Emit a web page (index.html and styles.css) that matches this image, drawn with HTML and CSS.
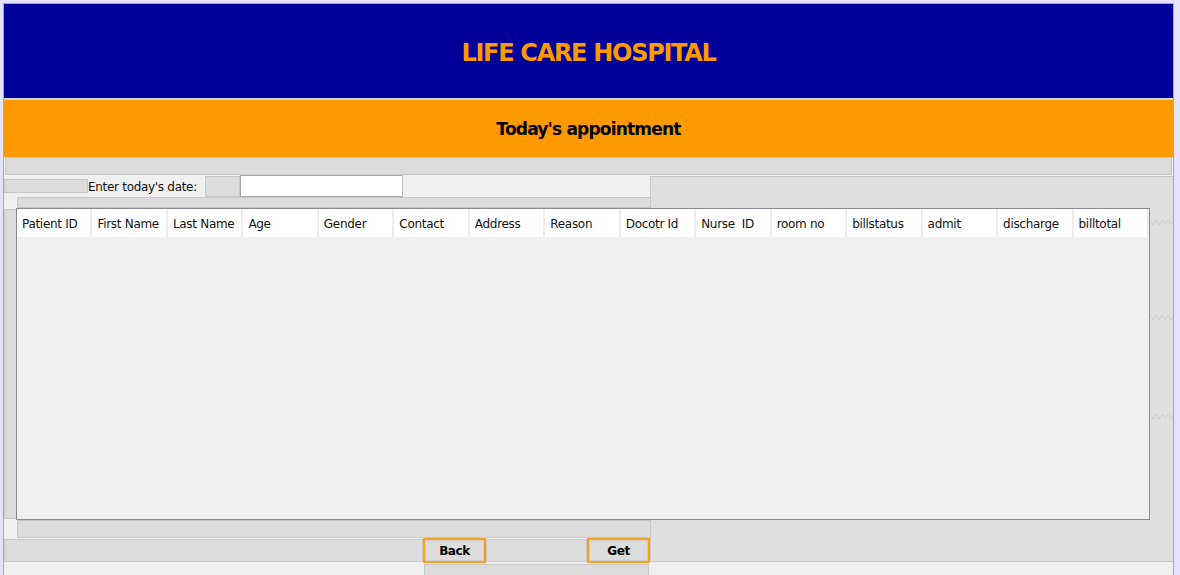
FILE: index.html
```html
<!DOCTYPE html>
<html>
<head>
<meta charset="utf-8">
<link rel="stylesheet" href="styles.css">
</head>
<body>
<div class="frame">
  <header class="banner"><h1 class="title">LIFE CARE HOSPITAL</h1></header>
  <div class="sep"></div>
  <div class="subbanner"><h2 class="subtitle">Today's appointment</h2></div>
  <div class="topbar"></div>
  <main class="main">
    <div class="rpanel"></div>
    <div class="daterow">
      <div class="pad-box"></div>
      <label class="lbl" for="d">Enter today's date:</label>
      <div class="gap-box"></div>
      <input id="d" class="date-input" type="text">
    </div>
    <div class="bar bar-b"></div>
    <div class="tablerow">
      <div class="lstrip"></div>
      <div class="table">
        <div class="thead">
          <div class="th">Patient ID</div>
          <div class="th">First Name</div>
          <div class="th">Last Name</div>
          <div class="th">Age</div>
          <div class="th">Gender</div>
          <div class="th">Contact</div>
          <div class="th">Address</div>
          <div class="th">Reason</div>
          <div class="th">Docotr Id</div>
          <div class="th">Nurse&nbsp; ID</div>
          <div class="th">room no</div>
          <div class="th">billstatus</div>
          <div class="th">admit</div>
          <div class="th">discharge</div>
          <div class="th">billtotal</div>
        </div>
      </div>
      <svg class="zig" width="23" height="312" viewBox="0 0 23 312">
        <polyline points="0,12 3,17 6,12 9,17 12,12 15,17 18,12 21,17 23,13" />
        <polyline points="0,107 3,112 6,107 9,112 12,107 15,112 18,107 21,112 23,108" />
        <polyline points="0,206 3,211 6,206 9,211 12,206 15,211 18,206 21,211 23,207" />
      </svg>
    </div>
    <div class="bar bar-d"></div>
    <div class="btnrow">
      <div class="gbox gbox-left"></div>
      <button class="btn">Back</button>
      <div class="gbox gbox-mid"></div>
      <button class="btn">Get</button>
    </div>
    <div class="bottomrow"><div class="gbox gbox-bottom"></div></div>
  </main>
</div>
</body>
</html>
```

FILE: styles.css
```css
* { box-sizing: border-box; }
html, body { margin: 0; padding: 0; }
body {
  background: #e3e3fb;
  font-family: "DejaVu Sans", Verdana, sans-serif;
  font-size: 12px;
  color: #000;
  height: 575px;
  overflow: hidden;
}
.frame {
  margin: 3px 0 0 3px;
  width: 1171px;
  height: 572px;
  border: 1px solid #f0a028;
  border-bottom: none;
  background: #f0f0f0;
  display: flex;
  flex-direction: column;
  overflow: hidden;
}
.frame > * { flex-shrink: 0; }
.banner {
  height: 94px;
  background: #000099;
  display: flex;
  align-items: center;
  justify-content: center;
  padding-top: 3px;
}
.title {
  margin: 0;
  color: #ff9900;
  font-size: 24px;
  font-weight: bold;
  letter-spacing: -1.3px;
}
.sep { height: 2px; background: #d4d4d4; }
.subbanner {
  height: 57px;
  background: #ff9900;
  display: flex;
  align-items: center;
  justify-content: center;
}
.subtitle {
  margin: 0;
  font-size: 17px;
  font-weight: bold;
  letter-spacing: -0.8px;
  color: #000;
}
.topbar {
  height: 18px;
  margin: 0 1px;
  background: #dcdcdc;
  border: 1px solid #c8c8c8;
}
.main {
  height: 400px;
  display: grid;
  grid-template-columns: 646px 523px;
  grid-template-rows: 22px 11px 312px 18px 25px 12px;
}
.rpanel {
  grid-column: 2;
  grid-row: 1 / 6;
  margin: 1px 0 1px 0;
  background: #dfdfdf;
  border: 1px solid #c8c8c8;
  border-right: none;
}
.daterow {
  grid-column: 1;
  grid-row: 1;
  display: flex;
  align-items: flex-start;
}
.pad-box {
  width: 84px;
  height: 14px;
  margin-top: 4px;
  background: #dcdcdc;
  border: 1px solid #c8c8c8;
}
.lbl {
  width: 117px;
  height: 22px;
  padding-top: 1px;
  line-height: 22px;
  letter-spacing: -0.3px;
  color: #111;
}
.gap-box {
  width: 35px;
  height: 21px;
  margin-top: 1px;
  background: #dcdcdc;
  border: 1px solid #c8c8c8;
}
.date-input {
  width: 163px;
  height: 22px;
  margin: 0;
  padding: 0 4px;
  background: #fff;
  border: 1px solid #a8a8a8;
  border-right-color: #c0c0c0;
  font: inherit;
  outline: none;
}
.bar {
  grid-column: 1;
  margin-left: 13px;
  background: #dcdcdc;
  border: 1px solid #c8c8c8;
  border-right: none;
}
.bar-b { grid-row: 2; }
.bar-d { grid-row: 4; }
.tablerow {
  grid-column: 1 / 3;
  grid-row: 3;
  display: flex;
  align-items: stretch;
}
.lstrip {
  width: 12px;
  margin: 1px 0 1px 0;
  background: #dcdcdc;
  border: 1px solid #c8c8c8;
  border-right: none;
}
.table {
  width: 1134px;
  border: 1px solid #8a8a92;
  background: #f0f0f0;
}
.thead {
  display: grid;
  grid-template-columns: repeat(15, 1fr);
  width: 1132px;
  height: 28px;
}
.th {
  background: #fff;
  border-right: 2px solid #ececec;
  padding: 2px 0 0 5px;
  line-height: 26px;
  letter-spacing: -0.3px;
  white-space: nowrap;
  overflow: hidden;
  color: #111;
}
.zig { display: block; margin-left: 0; }
.zig polyline { fill: none; stroke: #cfcfcf; stroke-width: 1; }
.btnrow {
  grid-column: 1;
  grid-row: 5;
  display: flex;
  align-items: flex-start;
}
.gbox {
  background: #dcdcdc;
  border: 1px solid #c8c8c8;
}
.gbox-left { width: 419px; height: 23px; margin-top: 1px; }
.gbox-mid { width: 101px; height: 23px; margin-top: 1px; }
.btn {
  width: 63px;
  height: 25px;
  margin: 0;
  padding: 0;
  background: #dcdcdc;
  border: 2px solid #f7a01e;
  box-shadow: inset 0 0 0 1px #d0d0d0;
  font-family: "DejaVu Sans", Verdana, sans-serif;
  font-size: 12px;
  font-weight: bold;
  letter-spacing: -0.4px;
  color: #000;
}
.bottomrow {
  grid-column: 1;
  grid-row: 6;
  padding: 1px 0 0 420px;
}
.gbox-bottom { width: 225px; height: 20px; border-bottom: none; }
```
